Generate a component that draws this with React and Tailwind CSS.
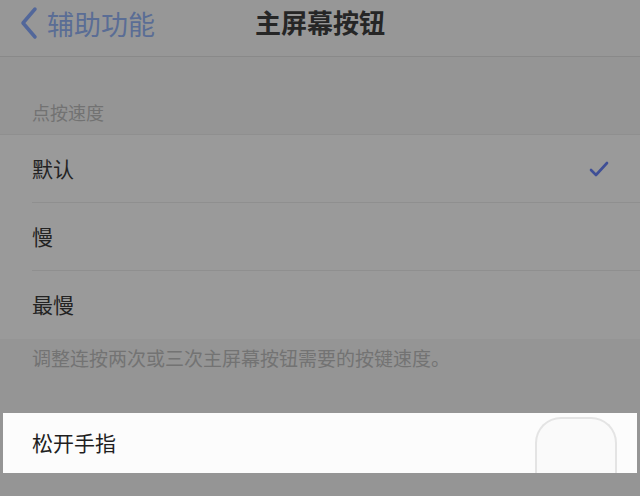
import React from "react";

const font = { fontFamily: '"Noto Sans CJK SC", "Noto Sans", sans-serif' };

function Row({ label, check, last }) {
  return (
    <div className="flex h-[68px] items-center pl-[32px]">
      <div className={`flex h-full flex-1 items-center pr-[30px] ${last ? "" : "border-b border-[#8f8f8f]"}`}>
        <span className="flex-1 text-[21px] text-[#232323]">{label}</span>
        {check && (
          <svg width="22" height="18" viewBox="0 0 22 18">
            <path d="M3 10 L8 15 L19 3" fill="none" stroke="#3f4f96" strokeWidth="2.6" strokeLinecap="round" strokeLinejoin="round" />
          </svg>
        )}
      </div>
    </div>
  );
}

export default function App() {
  return (
    <div className="h-[496px] w-[640px] overflow-hidden bg-[#959595]" style={font}>
      <div className="relative flex h-[57px] items-center border-b border-[#898989] bg-[#979797]">
        <div className="flex items-center pl-[18px] pb-[10px]">
          <svg width="22" height="34" viewBox="0 0 22 34">
            <path d="M17 3 L5 17 L17 31" fill="none" stroke="#52679a" strokeWidth="3.5" strokeLinecap="round" strokeLinejoin="round" />
          </svg>
          <span className="ml-[7px] text-[27px] leading-none text-[#5a6d95]">辅助功能</span>
        </div>
        <div className="absolute left-0 right-0 top-[6px] text-center text-[26px] font-bold leading-[32px] text-[#262626]">
          主屏幕按钮
        </div>
      </div>
      <div className="flex h-[77px] items-end pb-[10px] pl-[32px]">
        <span className="text-[18px] leading-[24px] text-[#727272]">点按速度</span>
      </div>
      <div className="border-t border-[#8f8f8f] bg-[#9a9a9a]">
        <Row label="默认" check />
        <Row label="慢" />
        <Row label="最慢" last />
      </div>
      <div className="h-[74px] pl-[32px] pt-[5px]">
        <span className="text-[19px] leading-[28px] text-[#737373]">调整连按两次或三次主屏幕按钮需要的按键速度。</span>
      </div>
      <div className="mx-[3px] flex h-[60px] items-center bg-[#fcfcfc] pl-[29px] pr-[20px]">
        <span className="flex-1 text-[21px] text-[#1f1f1f]">松开手指</span>
        <div className="mt-[4px] h-[56px] w-[82px] rounded-t-[26px] border-[2px] border-b-0 border-[#e4e4e4] bg-[#fafafa]" />
      </div>
    </div>
  );
}
